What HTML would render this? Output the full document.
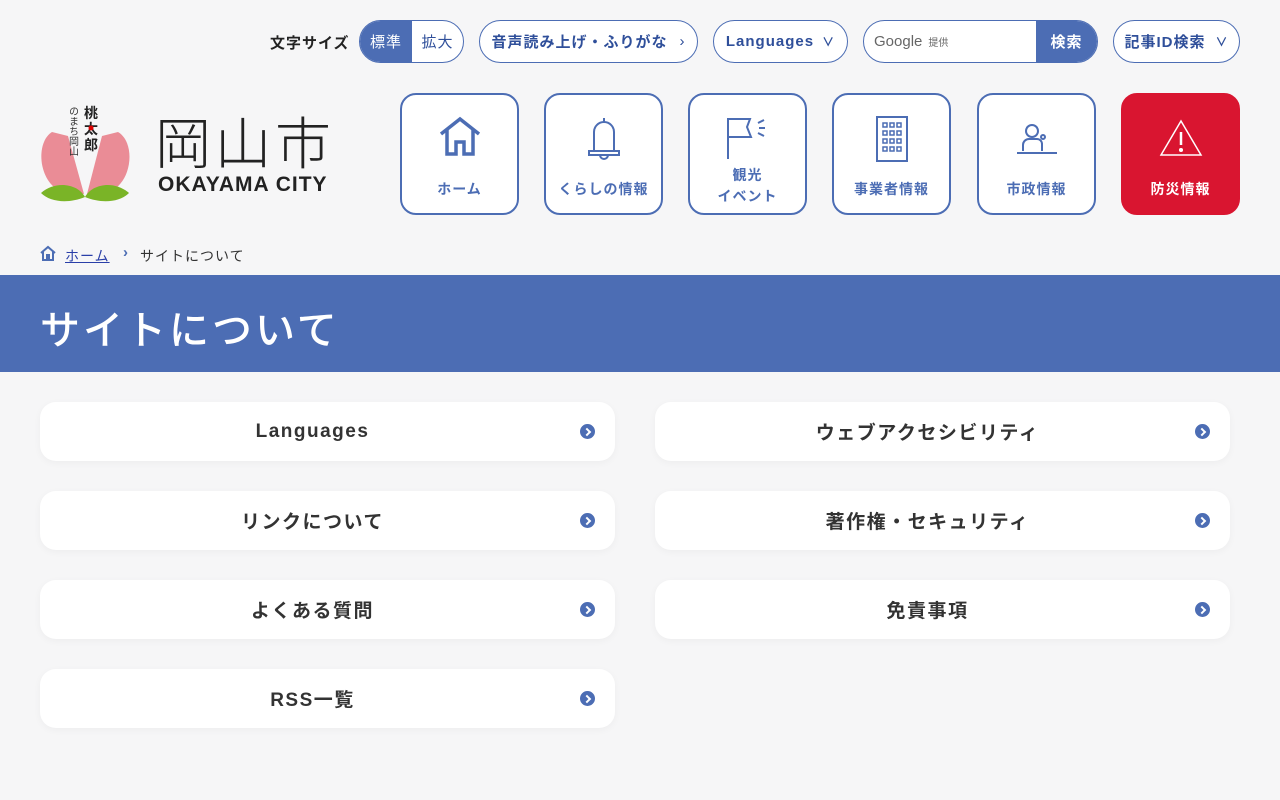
<!DOCTYPE html>
<html lang="ja"><head><meta charset="utf-8"><style>
*{box-sizing:border-box;margin:0;padding:0}
body{width:1280px;height:800px;background:#f6f6f7;font-family:"Liberation Sans","Noto Sans CJK JP",sans-serif;position:relative;overflow:hidden;color:#333}
.abs{position:absolute}
.pill{position:absolute;top:20px;height:43px;border:1px solid #4c6db4;border-radius:22px;background:#fff;color:#2f4f9a;font-weight:bold;font-size:15px;display:flex;align-items:center;justify-content:center;letter-spacing:1px}
.nav{position:absolute;top:93px;width:119px;height:122px;border:2px solid #4c6db4;border-radius:16px;background:#fff;color:#4c6db4;font-size:14px;font-weight:bold;text-align:center;letter-spacing:1px}
.nav svg{position:absolute;left:50%;transform:translateX(-50%)}
.nav .t{position:absolute;left:0;right:0;top:84px}
.card{position:absolute;width:575px;height:59px;background:#fff;border-radius:16px;box-shadow:0 2px 8px rgba(0,0,0,.04);display:flex;align-items:center;justify-content:center;padding-right:30px;font-size:19px;font-weight:bold;letter-spacing:1.5px;color:#333}
.card i{position:absolute;right:20px;top:22px;width:15px;height:15px;border-radius:50%;background:#4c6db4}
.card i:after{content:"";position:absolute;left:4px;top:4.5px;width:4px;height:4px;border-right:2px solid #fff;border-top:2px solid #fff;transform:rotate(45deg)}
</style></head><body>
<div class="abs" style="left:270px;top:32px;font-size:15px;font-weight:bold;color:#222;letter-spacing:1px">文字サイズ</div>
<div class="pill" style="left:359px;width:105px;overflow:hidden;justify-content:flex-start;font-weight:normal">
<span style="background:#4c6db4;color:#fff;width:53px;height:100%;display:flex;align-items:center;justify-content:center">標準</span><span style="width:52px;text-align:center;color:#2f4f9a">拡大</span></div>
<div class="pill" style="left:479px;width:219px">音声読み上げ・ふりがな<span style="margin-left:12px;font-weight:normal">›</span></div>
<div class="pill" style="left:713px;width:135px">Languages<span style="margin-left:8px;font-size:12px">∨</span></div>
<div class="pill" style="left:863px;width:235px;justify-content:flex-start;overflow:hidden;color:#666;font-weight:normal;letter-spacing:0">
<span style="margin-left:10px;font-size:15px">Google</span><span style="font-size:10px;margin-left:6px">提供</span>
<span style="position:absolute;right:0;top:0;width:61px;height:100%;background:#4c6db4;color:#fff;font-weight:bold;display:flex;align-items:center;justify-content:center;letter-spacing:1px">検索</span></div>
<div class="pill" style="left:1113px;width:127px">記事ID検索<span style="margin-left:10px;font-size:12px">∨</span></div>

<svg class="abs" style="left:38px;top:100px" width="95" height="105" viewBox="0 0 95 105">
<path d="M14 32 C-2 42 0 78 20 90 L46 94 L30 36 Z" fill="#ea8c96"/>
<path d="M80 32 C97 42 95 78 75 90 L49 94 L64 36 Z" fill="#ea8c96"/>
<path d="M3 93 C18 80 40 84 47 97 C30 104 12 102 3 93Z" fill="#7ab427"/>
<path d="M91 93 C76 80 54 84 47 97 C64 104 82 102 91 93Z" fill="#7ab427"/>
<text x="46" y="18" font-size="14" font-weight="bold" fill="#222" font-family="Noto Sans CJK JP">桃</text>
<text x="46" y="34" font-size="14" font-weight="bold" fill="#222" font-family="Noto Sans CJK JP">太</text>
<text x="46" y="50" font-size="14" font-weight="bold" fill="#222" font-family="Noto Sans CJK JP">郎</text>
<circle cx="53" cy="28" r="2.5" fill="#d00"/>
<text x="36" y="6" font-size="10" fill="#333" writing-mode="tb" font-family="Noto Sans CJK JP">のまち岡山</text>
</svg>
<div class="abs" style="left:155px;top:106px;font-size:56px;line-height:70px;color:#222;letter-spacing:4px;font-weight:300;font-family:'Noto Sans CJK JP',sans-serif">岡山市</div>
<div class="abs" style="left:158px;top:173px;font-size:21px;font-weight:bold;color:#222;letter-spacing:1px">OKAYAMA CITY</div>

<div class="nav" style="left:400px"><svg style="top:20px" width="44" height="42" viewBox="0 0 44 42" fill="none" stroke="#4c6db4" stroke-width="3.5"><path d="M3 19 L22 4 L41 19"/><path d="M9 15 V39 H18 V27 H26 V39 H35 V15"/></svg><div class="t">ホーム</div></div>
<div class="nav" style="left:544px"><svg style="top:20px" width="36" height="46" viewBox="0 0 36 46" fill="none" stroke="#4c6db4" stroke-width="2"><path d="M18 3 V7 M8 36 V17 A10 10 0 0 1 28 17 V36 M3 36 H33 V40 H3Z M14 40 A4 4 0 0 0 22 40"/></svg><div class="t">くらしの情報</div></div>
<div class="nav" style="left:688px"><svg style="top:22px" width="48" height="44" viewBox="0 0 48 44" fill="none" stroke="#4c6db4" stroke-width="2"><path d="M4 42 V2 H26 L23 10 L27 20 H4"/><path d="M34 6 L40 3 M35 11 H41 M34 16 L40 19"/></svg><div class="t" style="top:70px;line-height:21px">観光<br>イベント</div></div>
<div class="nav" style="left:832px"><svg style="top:20px" width="36" height="48" viewBox="0 0 36 48" fill="none" stroke="#4c6db4" stroke-width="2"><rect x="3" y="2" width="30" height="44"/><g stroke-width="1.5"><rect x="9" y="8" width="4" height="4"/><rect x="16" y="8" width="4" height="4"/><rect x="23" y="8" width="4" height="4"/><rect x="9" y="16" width="4" height="4"/><rect x="16" y="16" width="4" height="4"/><rect x="23" y="16" width="4" height="4"/><rect x="9" y="24" width="4" height="4"/><rect x="16" y="24" width="4" height="4"/><rect x="23" y="24" width="4" height="4"/><rect x="9" y="32" width="4" height="4"/><rect x="16" y="32" width="4" height="4"/><rect x="23" y="32" width="4" height="4"/></g></svg><div class="t">事業者情報</div></div>
<div class="nav" style="left:977px"><svg style="top:28px" width="44" height="34" viewBox="0 0 44 34" fill="none" stroke="#4c6db4" stroke-width="2"><circle cx="17" cy="8" r="6"/><path d="M8 28 V22 A6 6 0 0 1 14 16 H22 A5 5 0 0 1 27 21 V28 M2 30 H42"/><circle cx="28" cy="14" r="2"/></svg><div class="t">市政情報</div></div>
<div class="nav" style="left:1121px;background:#d91530;border-color:#d91530;color:#fff"><svg style="top:24px" width="44" height="38" viewBox="0 0 44 38" fill="none" stroke="#fff" stroke-width="1.5"><path d="M22 2 L42 36 H2 Z"/><path d="M22 13 V26" stroke-width="2.5"/><circle cx="22" cy="31" r="1.3" fill="#fff"/></svg><div class="t">防災情報</div></div>

<svg class="abs" style="left:40px;top:245px" width="16" height="16" viewBox="0 0 16 16" fill="none" stroke="#4c6db4" stroke-width="2"><path d="M1 8 L8 2 L15 8 M3 6 V15 H7 V10 H9 V15 H13 V6"/></svg>
<div class="abs" style="left:65px;top:246px;font-size:14px;color:#2a3fa8;text-decoration:underline;letter-spacing:1px">ホーム</div>
<div class="abs" style="left:123px;top:244px;font-size:15px;color:#4c6db4;font-weight:bold">›</div>
<div class="abs" style="left:140px;top:246px;font-size:14px;color:#333;letter-spacing:1px">サイトについて</div>

<div class="abs" style="left:0;top:275px;width:1280px;height:97px;background:#4c6db4"></div>
<div class="abs" style="left:40px;top:298px;font-size:40px;color:#fff;font-weight:500;font-family:'Noto Sans CJK JP',sans-serif;letter-spacing:3px">サイトについて</div>

<div class="card" style="left:40px;top:402px">Languages<i></i></div>
<div class="card" style="left:655px;top:402px">ウェブアクセシビリティ<i></i></div>
<div class="card" style="left:40px;top:491px">リンクについて<i></i></div>
<div class="card" style="left:655px;top:491px">著作権・セキュリティ<i></i></div>
<div class="card" style="left:40px;top:580px">よくある質問<i></i></div>
<div class="card" style="left:655px;top:580px">免責事項<i></i></div>
<div class="card" style="left:40px;top:669px">RSS一覧<i></i></div>
</body></html>
